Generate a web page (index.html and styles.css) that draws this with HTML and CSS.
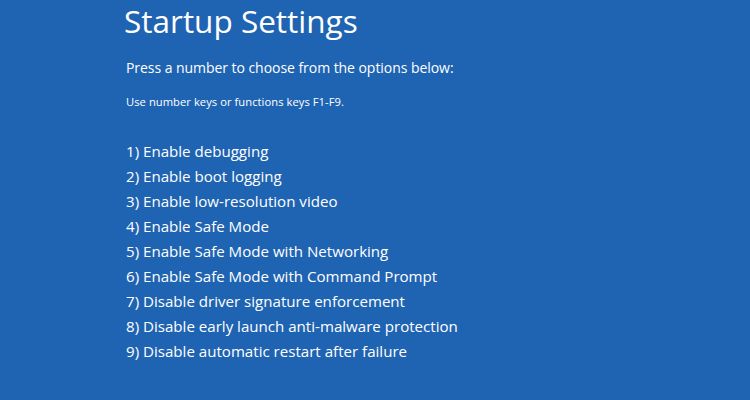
FILE: index.html
```html
<html>
    <head>
        <title>Startup Settings</title>
        <link rel="stylesheet" href="styles.css">
    </head>
    <body>
        <div class="screen">
            <h1 class="title">Startup Settings</h1>
            <p class="prompt">Press a number to choose from the options below:</p>
            <p class="hint">Use number keys or functions keys F1-F9.</p>
            <ol class="options">
                <li>1) Enable debugging</li>
                <li>2) Enable boot logging</li>
                <li>3) Enable low-resolution video</li>
                <li>4) Enable Safe Mode</li>
                <li>5) Enable Safe Mode with Networking</li>
                <li>6) Enable Safe Mode with Command Prompt</li>
                <li>7) Disable driver signature enforcement</li>
                <li>8) Disable early launch anti-malware protection</li>
                <li>9) Disable automatic restart after failure</li>
            </ol>
        </div>
    </body>
</html>
```

FILE: styles.css
```css
body
{
    margin: 0;
    padding: 0;
    background-color: #1f64b2;
}
.screen
{
    width: 750px;
    height: 400px;
    padding-left: 124px;
    box-sizing: border-box;
    color: #ffffff;
    font-family: "Open Sans", "Noto Sans", sans-serif;
    overflow: hidden;
}
.title
{
    margin: 0;
    font-size: 31.5px;
    font-weight: normal;
    line-height: 42px;
}
.prompt
{
    margin: 15px 0 0 2px;
    font-size: 14px;
    letter-spacing: -0.05px;
    line-height: 22px;
}
.hint
{
    margin: 15px 0 0 2px;
    font-size: 11.2px;
    letter-spacing: 0.05px;
    line-height: 16px;
}
.options
{
    list-style: none;
    margin: 29px 0 0 2px;
    padding: 0;
    font-size: 15.1px;
    line-height: 25px;
}
```
